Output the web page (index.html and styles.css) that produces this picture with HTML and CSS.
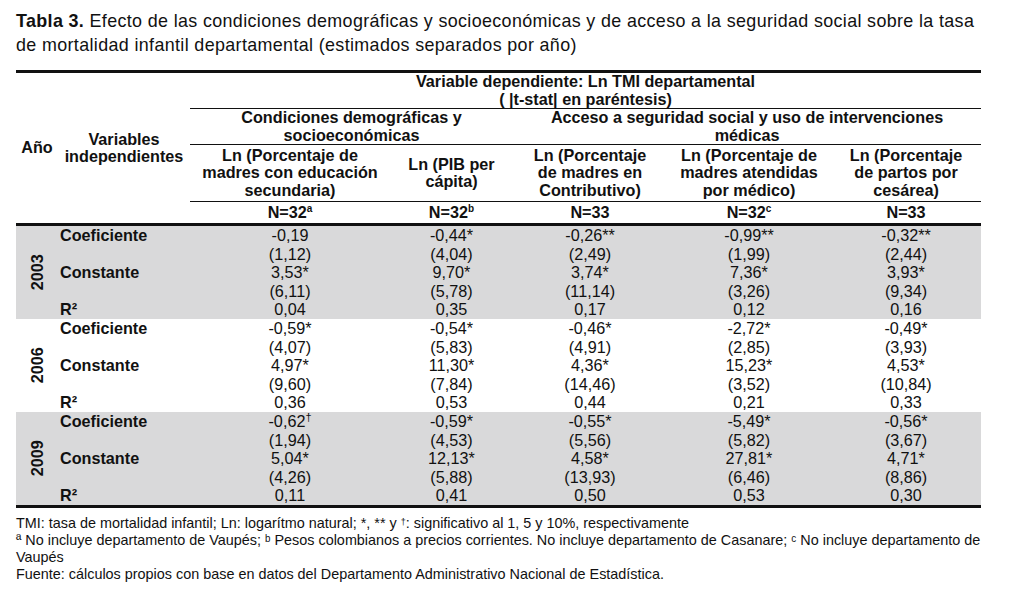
FILE: index.html
```html
<!DOCTYPE html>
<html lang="es">
<head>
<meta charset="utf-8">
<title>Tabla 3</title>
<link rel="stylesheet" href="styles.css">
</head>
<body>
<div class="page">
  <p class="caption"><b>Tabla 3.</b> Efecto de las condiciones demográficas y socioeconómicas y de acceso a la seguridad social sobre la tasa<br>de mortalidad infantil departamental (estimados separados por año)</p>

  <table class="tbl">
    <colgroup>
      <col class="c-year"><col class="c-var"><col class="c-1"><col class="c-2"><col class="c-3"><col class="c-4"><col class="c-5">
    </colgroup>
    <thead>
      <tr class="h1">
        <th rowspan="4" class="corner">Año</th>
        <th rowspan="4" class="corner">Variables<br>independientes</th>
        <th colspan="5" class="line">Variable dependiente: Ln TMI departamental<br>( |t-stat| en paréntesis)</th>
      </tr>
      <tr class="h2">
        <th colspan="2" class="line">Condiciones demográficas y<br>socioeconómicas</th>
        <th colspan="3" class="line">Acceso a seguridad social y uso de intervenciones<br>médicas</th>
      </tr>
      <tr class="h3">
        <th class="line">Ln (Porcentaje de<br>madres con educación<br>secundaria)</th>
        <th class="line">Ln (PIB per<br>cápita)</th>
        <th class="line">Ln (Porcentaje<br>de madres en<br>Contributivo)</th>
        <th class="line">Ln (Porcentaje de<br>madres atendidas<br>por médico)</th>
        <th class="line">Ln (Porcentaje<br>de partos por<br>cesárea)</th>
      </tr>
      <tr class="h4">
        <th>N=32<sup>a</sup></th>
        <th>N=32<sup>b</sup></th>
        <th>N=33</th>
        <th>N=32<sup>c</sup></th>
        <th>N=33</th>
      </tr>
    </thead>
    <tbody class="shade">
      <tr><td rowspan="5" class="year"><span>2003</span></td><td class="lbl">Coeficiente</td><td>-0,19</td><td>-0,44*</td><td>-0,26**</td><td>-0,99**</td><td>-0,32**</td></tr>
      <tr><td class="lbl" rowspan="3">Constante</td><td>(1,12)</td><td>(4,04)</td><td>(2,49)</td><td>(1,99)</td><td>(2,44)</td></tr>
      <tr><td>3,53*</td><td>9,70*</td><td>3,74*</td><td>7,36*</td><td>3,93*</td></tr>
      <tr><td>(6,11)</td><td>(5,78)</td><td>(11,14)</td><td>(3,26)</td><td>(9,34)</td></tr>
      <tr><td class="lbl">R²</td><td>0,04</td><td>0,35</td><td>0,17</td><td>0,12</td><td>0,16</td></tr>
    </tbody>
    <tbody>
      <tr><td rowspan="5" class="year"><span>2006</span></td><td class="lbl">Coeficiente</td><td>-0,59*</td><td>-0,54*</td><td>-0,46*</td><td>-2,72*</td><td>-0,49*</td></tr>
      <tr><td class="lbl" rowspan="3">Constante</td><td>(4,07)</td><td>(5,83)</td><td>(4,91)</td><td>(2,85)</td><td>(3,93)</td></tr>
      <tr><td>4,97*</td><td>11,30*</td><td>4,36*</td><td>15,23*</td><td>4,53*</td></tr>
      <tr><td>(9,60)</td><td>(7,84)</td><td>(14,46)</td><td>(3,52)</td><td>(10,84)</td></tr>
      <tr><td class="lbl">R²</td><td>0,36</td><td>0,53</td><td>0,44</td><td>0,21</td><td>0,33</td></tr>
    </tbody>
    <tbody class="shade last">
      <tr><td rowspan="5" class="year"><span>2009</span></td><td class="lbl">Coeficiente</td><td>-0,62<sup class="dag">†</sup></td><td>-0,59*</td><td>-0,55*</td><td>-5,49*</td><td>-0,56*</td></tr>
      <tr><td class="lbl" rowspan="3">Constante</td><td>(1,94)</td><td>(4,53)</td><td>(5,56)</td><td>(5,82)</td><td>(3,67)</td></tr>
      <tr><td>5,04*</td><td>12,13*</td><td>4,58*</td><td>27,81*</td><td>4,71*</td></tr>
      <tr><td>(4,26)</td><td>(5,88)</td><td>(13,93)</td><td>(6,46)</td><td>(8,86)</td></tr>
      <tr><td class="lbl">R²</td><td>0,11</td><td>0,41</td><td>0,50</td><td>0,53</td><td>0,30</td></tr>
    </tbody>
  </table>

  <div class="notes">
    <p>TMI: tasa de mortalidad infantil; Ln: logarítmo natural; *, ** y <sup>†</sup>: significativo al 1, 5 y 10%, respectivamente</p>
    <p>ª No incluye departamento de Vaupés; ᵇ Pesos colombianos a precios corrientes. No incluye departamento de Casanare; ᶜ No incluye departamento de Vaupés</p>
    <p>Fuente: cálculos propios con base en datos del Departamento Administrativo Nacional de Estadística.</p>
  </div>
</div>
</body>
</html>
```

FILE: styles.css
```css
html, body {
  margin: 0;
  padding: 0;
  background: #ffffff;
}

.page {
  padding: 9px 32px 0 16px;
  font-family: "Liberation Sans", Arial, sans-serif;
  color: #111111;
}

.caption {
  margin: 0 -24px 0 0;
  font-size: 17.9px;
  letter-spacing: 0.36px;
  line-height: 24px;
}

.tbl {
  margin-top: 13px;
  width: 965px;
  border-collapse: collapse;
  table-layout: fixed;
  border-top: 3px solid #111;
  border-bottom: 3px solid #111;
}

.c-year { width: 42px; }
.c-var { width: 132px; }
.c-1 { width: 200px; }
.c-2 { width: 123px; }
.c-3 { width: 154px; }
.c-4 { width: 164px; }
.c-5 { width: 150px; }

.tbl th {
  font-size: 16.2px;
  font-weight: bold;
  line-height: 17.5px;
  text-align: center;
  padding: 0;
  vertical-align: middle;
}

.tbl th.line {
  border-bottom: 1px solid #111;
}

.tbl .h1 th.line { height: 34px; }
.tbl .h2 th { height: 35px; }
.tbl .h3 th { height: 56px; }
.tbl .h4 th { height: 20px; padding-top: 1px; }

.tbl thead {
  border-bottom: 3px solid #111;
}

.tbl td {
  font-size: 16.2px;
  line-height: 18.6px;
  height: 18.6px;
  padding: 0;
  text-align: center;
  vertical-align: middle;
  white-space: nowrap;
}

.tbl td.lbl {
  text-align: left;
  font-weight: bold;
  padding-left: 2px;
}

.tbl td.year {
  font-weight: bold;
  padding: 0;
}

.tbl td.year span {
  display: block;
  transform: rotate(-90deg);
  white-space: nowrap;
}

.shade td {
  background: #d9d9da;
}

sup {
  font-size: 10px;
  line-height: 0;
  vertical-align: 6px;
}

.dag {
  font-size: 11px;
}

.notes {
  margin-top: 7px;
  margin-right: -6px;
  font-size: 14.4px;
  line-height: 17px;
}

.notes p {
  margin: 0;
}

.notes sup {
  font-size: 9px;
  vertical-align: 3px;
}
```
